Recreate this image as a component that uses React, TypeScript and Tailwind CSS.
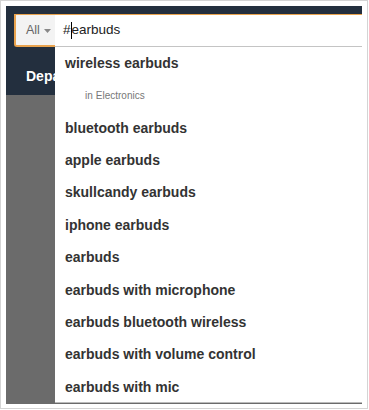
const suggestions = [
  'bluetooth earbuds',
  'apple earbuds',
  'skullcandy earbuds',
  'iphone earbuds',
  'earbuds',
  'earbuds with microphone',
  'earbuds bluetooth wireless',
  'earbuds with volume control',
  'earbuds with mic',
];

const App = () => {
  return (
    <div className="w-[369px] h-[410px] bg-white">
      <div
        className="w-[368px] h-[409px] border border-[#d4d4d4] p-[5px]"
        style={{ fontFamily: '"Liberation Sans", Arial, sans-serif' }}
      >
        <div className="relative w-[356px] h-[398px] overflow-hidden bg-[#6b6b6b]">
          {/* header */}
          <div className="h-[89px] bg-[#232f3e] pt-[8px] pl-[8px]">
            <div className="flex h-[33px] border-t border-[#e9a34e]">
              <div className="flex items-center gap-[4px] w-[41px] pl-[10px] bg-[#f3f3f3] border-l-2 border-b-2 border-[#e9a34e] rounded-bl-[3px] text-[12.5px] text-[#666]">
                <span>All</span>
                <svg width="7" height="4" viewBox="0 0 7 4" className="mt-[1px]">
                  <path d="M0 0h7L3.5 4z" fill="#888" />
                </svg>
              </div>
              <div className="flex-1 bg-white"></div>
            </div>
            <div className="pl-[12px] pt-[19px] text-[14px] font-bold text-white">Departments</div>
          </div>

          {/* suggestion dropdown */}
          <div className="absolute left-[49px] top-[9px] right-0 bottom-[1px] bg-white border-b border-[#bbb]">
            <div className="flex items-center h-[32px] pl-[8px] border-b border-[#c4c4c4] text-[13.5px] text-[#222]">
              <span>#</span>
              <span className="inline-block w-px h-[17px] bg-black"></span>
              <span>earbuds</span>
            </div>
            <div className="flex items-center h-[32px] pl-[10px] text-[14px] font-bold text-[#333]">
              wireless earbuds
            </div>
            <div className="flex items-center h-[33px] pl-[30px] text-[10px] text-[#777]">
              <span className="mr-[3px]">in</span>Electronics
            </div>
            {suggestions.map((s) => (
              <div key={s} className="flex items-center h-[32.4px] pl-[10px] text-[14px] font-bold text-[#333]">
                {s}
              </div>
            ))}
          </div>
        </div>
      </div>
    </div>
  );
};

export default App;
